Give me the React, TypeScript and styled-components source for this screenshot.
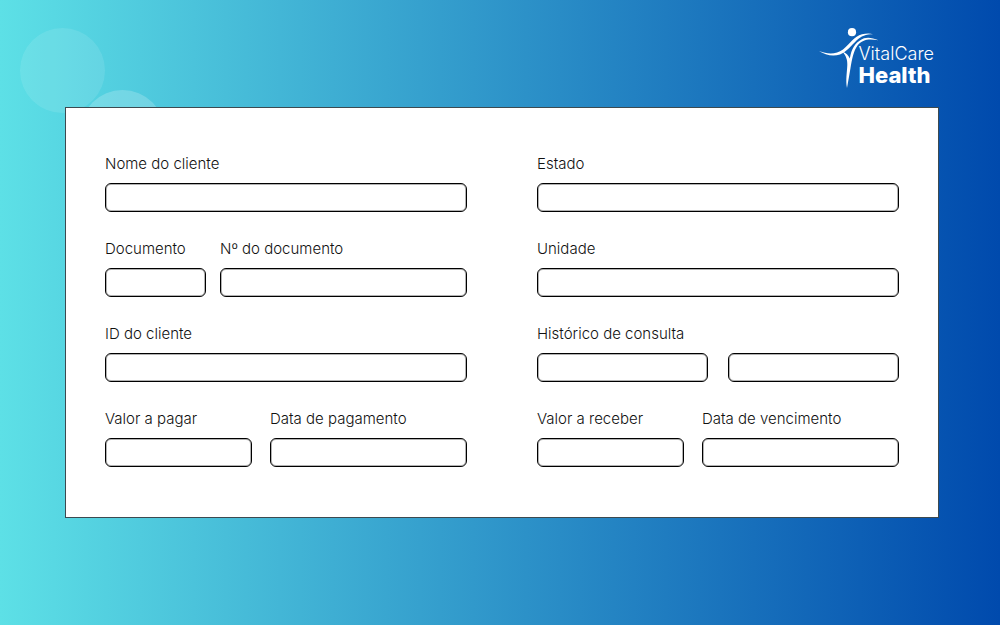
import React from "react";
import styled, { createGlobalStyle } from "styled-components";

const GlobalStyle = createGlobalStyle`
  *, *::before, *::after { box-sizing: border-box; }
  body {
    margin: 0;
    font-family: Inter, "Open Sans", sans-serif;
  }
`;

const Page = styled.div`
  position: relative;
  min-height: 100vh;
  padding: 28px 61px 40px 65px;
  overflow: hidden;
  background: linear-gradient(90deg, #5de0e6, #004aad);
`;

const Bubble = styled.div<{ $left: number; $top: number; $alpha: number }>`
  position: absolute;
  left: ${(p) => p.$left}px;
  top: ${(p) => p.$top}px;
  width: 85px;
  height: 85px;
  border-radius: 50%;
  background: rgba(255, 255, 255, ${(p) => p.$alpha});
`;

const Header = styled.header`
  display: flex;
  justify-content: flex-end;
  height: 79px;
  padding-right: 5px;
`;

const Brand = styled.div`
  display: flex;
  align-items: flex-start;
  color: #fff;
`;

const Figure = styled.svg`
  width: 60px;
  height: 60px;
  margin-right: -20px;
`;

const BrandText = styled.div`
  display: flex;
  flex-direction: column;
  padding-top: 16px;
`;

const BrandName = styled.span`
  font-size: 18px;
  font-weight: 300;
  line-height: 20px;
`;

const BrandStrong = styled.span`
  font-size: 22px;
  font-weight: 800;
  line-height: 22px;
`;

const Card = styled.form`
  position: relative;
  display: grid;
  grid-template-columns: 1fr 1fr;
  column-gap: 70px;
  padding: 44px 39px 50px;
  background: #fff;
  border: 1px solid #3c4a50;
`;

const Column = styled.div`
  display: flex;
  flex-direction: column;
  gap: 25px;
  min-width: 0;
`;

const Row = styled.div<{ $columns?: string; $gap?: number }>`
  display: grid;
  grid-template-columns: ${(p) => p.$columns ?? "1fr"};
  column-gap: ${(p) => p.$gap ?? 0}px;
  align-items: end;
`;

const FieldBox = styled.div`
  display: flex;
  flex-direction: column;
  gap: 7px;
  min-width: 0;
`;

const Label = styled.label`
  font-size: 15px;
  font-weight: 300;
  line-height: 24px;
  color: #111;
  white-space: nowrap;
`;

const Input = styled.input`
  width: 100%;
  height: 29px;
  padding: 0 8px;
  border: 1px solid #000;
  border-radius: 6px;
  box-shadow: inset 0 0 0 1px rgba(0, 0, 0, 0.3);
  background: #fff;
  font: inherit;
  font-size: 15px;
`;

function Field({ id, label }: { id: string; label: string }) {
  return (
    <FieldBox>
      <Label htmlFor={id}>{label}</Label>
      <Input id={id} name={id} type="text" />
    </FieldBox>
  );
}

export default function App() {
  return (
    <>
      <GlobalStyle />
      <Page>
        <Bubble $left={20} $top={28} $alpha={0.1} />
        <Bubble $left={80} $top={90} $alpha={0.2} />
        <Header>
          <Brand>
            <Figure viewBox="0 0 60 60" fill="currentColor" aria-hidden="true">
              <circle cx="33" cy="4.2" r="4.1" />
              <path d="M0 23 C9 26.5 17 26.5 24 21.5 C31 16 35 8.5 43 6.3 C47 5.2 51 5 54 6.2 C47 6.2 42 8 37.500 12.500 C32.500 17.500 28 23.500 21 26.400 C14 28.800 6 27 0 23 Z" />
              <path d="M59.500 12.300 C54 9.800 49 9 45 10.300 C38 13 33.500 19 31.500 27 C31.200 28.500 31 29.500 30.800 30.500 C29.500 27.500 27 24.800 23.500 23.500 C27 28 28.500 31.500 28.300 37 C28 45 26.500 52 28 60 C29.500 52 30.500 46 31.500 40 C33 31 34.500 23 38.500 17.500 C43.500 11.200 50 10.500 59.500 12.300 Z" />
            </Figure>
            <BrandText>
              <BrandName>VitalCare</BrandName>
              <BrandStrong>Health</BrandStrong>
            </BrandText>
          </Brand>
        </Header>
        <Card>
          <Column>
            <Row>
              <Field id="nome" label="Nome do cliente" />
            </Row>
            <Row $columns="101fr 247fr" $gap={14}>
              <Field id="documento" label="Documento" />
              <Field id="numero-documento" label="Nº do documento" />
            </Row>
            <Row>
              <Field id="id-cliente" label="ID do cliente" />
            </Row>
            <Row $columns="147fr 197fr" $gap={18}>
              <Field id="valor-pagar" label="Valor a pagar" />
              <Field id="data-pagamento" label="Data de pagamento" />
            </Row>
          </Column>
          <Column>
            <Row>
              <Field id="estado" label="Estado" />
            </Row>
            <Row>
              <Field id="unidade" label="Unidade" />
            </Row>
            <Row $columns="1fr 1fr" $gap={20}>
              <Field id="historico" label="Histórico de consulta" />
              <Input
                name="historico-fim"
                type="text"
                aria-label="Histórico de consulta, segundo campo"
              />
            </Row>
            <Row $columns="147fr 197fr" $gap={18}>
              <Field id="valor-receber" label="Valor a receber" />
              <Field id="data-vencimento" label="Data de vencimento" />
            </Row>
          </Column>
        </Card>
      </Page>
    </>
  );
}
